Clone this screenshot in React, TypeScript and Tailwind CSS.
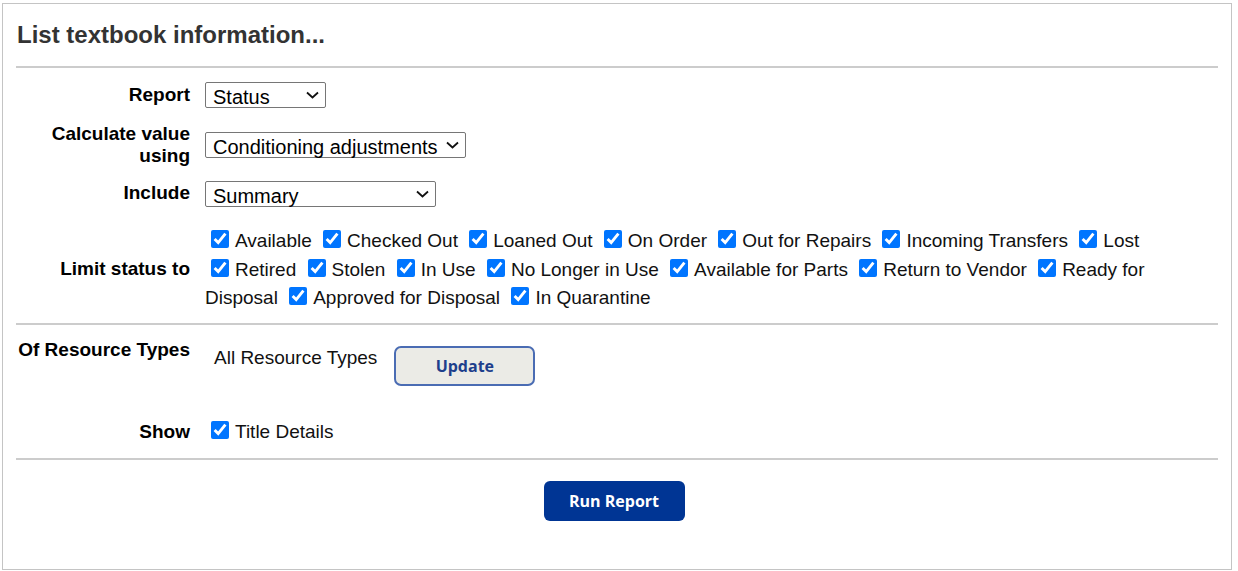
import type { ReactNode } from "react";

const statuses = [
  "Available",
  "Checked Out",
  "Loaned Out",
  "On Order",
  "Out for Repairs",
  "Incoming Transfers",
  "Lost",
  "Retired",
  "Stolen",
  "In Use",
  "No Longer in Use",
  "Available for Parts",
  "Return to Vendor",
  "Ready for Disposal",
  "Approved for Disposal",
  "In Quarantine",
];

const Label = ({ children, className = "" }: { children: ReactNode; className?: string }) => (
  <div className={`w-[174px] shrink-0 text-right text-[19px] font-bold leading-[22px] text-black ${className}`}>
    {children}
  </div>
);

const FakeSelect = ({ value, width }: { value: string; width: string }) => (
  <div
    className={`flex h-[26px] ${width} items-center justify-between rounded-[2px] border border-[#767676] bg-white pl-[7px] pr-[6px] pt-[3px] text-[20px] leading-[22px] text-black`}
  >
    <span>{value}</span>
    <svg width="13" height="8" viewBox="0 0 13 8" className="mb-[3px]">
      <path d="M1 1.5 L6.5 6.5 L12 1.5" fill="none" stroke="#111" strokeWidth="1.8" />
    </svg>
  </div>
);

const Check = () => (
  <input
    type="checkbox"
    checked
    readOnly
    className="mx-[6px] inline-block h-[18px] w-[18px] align-[-1px] accent-[#0075ff]"
  />
);

const Status = ({ text }: { text: string }) => {
  const [first, ...rest] = text.split(" ");
  return (
    <>
      <span className="whitespace-nowrap">
        <Check />
        {first}
      </span>
      {rest.length ? " " + rest.join(" ") : ""}{" "}
    </>
  );
};

const Rule = ({ className = "" }: { className?: string }) => (
  <div className={`h-[2px] bg-[#cccccc] ${className}`} />
);

export default function App() {
  return (
    <div className="min-h-[571px] bg-white pt-[3px] font-['Liberation_Sans',Arial,sans-serif]">
      <div className="ml-[2px] h-[567px] w-[1230px] border border-[#c4c4c4] bg-white px-[13px]">
        <h1 className="pl-[1px] pt-[17px] text-[24px] font-bold leading-[27px] text-[#333333]">
          List textbook information...
        </h1>
        <Rule className="mt-[18px]" />

        <div className="mt-[14px] flex items-center gap-[15px]">
          <Label>Report</Label>
          <FakeSelect value="Status" width="w-[121px]" />
        </div>

        <div className="mt-[15px] flex items-center gap-[15px]">
          <Label>Calculate value using</Label>
          <FakeSelect value="Conditioning adjustments" width="w-[261px]" />
        </div>

        <div className="mt-[14px] flex items-center gap-[15px]">
          <Label className="mb-[3px]">Include</Label>
          <FakeSelect value="Summary" width="w-[231px]" />
        </div>

        <div className="mt-[20px] flex items-center gap-[15px]">
          <Label className="mt-[-1px]">Limit status to</Label>
          <div className="flex-1 text-[19px] leading-[28.5px] text-[#111]">
            {statuses.map((s) => (
              <Status key={s} text={s} />
            ))}
          </div>
        </div>

        <Rule className="mt-[10px]" />

        <div className="mt-[14px] flex items-start gap-[15px]">
          <Label className="whitespace-nowrap">Of Resource Types</Label>
          <div className="flex items-start">
            <span className="mt-[8px] pl-[9px] text-[19px] leading-[22px] text-[#111]">All Resource Types</span>
            <button
              type="button"
              className="ml-[17px] mt-[7px] h-[40px] w-[141px] rounded-[7px] border-2 border-[#4a6cb3] bg-[#ebebe6] font-['Open_Sans',sans-serif] text-[16px] font-bold text-[#1e3f8c]"
            >
              Update
            </button>
          </div>
        </div>

        <div className="mt-[35px] flex items-center gap-[15px]">
          <Label>Show</Label>
          <div className="text-[19px] leading-[22px] text-[#111]">
            <Check />
            Title Details
          </div>
        </div>

        <Rule className="mt-[15px]" />

        <div className="mt-[21px] flex justify-center pr-[6px]">
          <button
            type="button"
            className="h-[40px] w-[141px] rounded-[6px] bg-[#003594] font-['Open_Sans',sans-serif] text-[16px] font-bold text-white"
          >
            Run Report
          </button>
        </div>
      </div>
    </div>
  );
}
